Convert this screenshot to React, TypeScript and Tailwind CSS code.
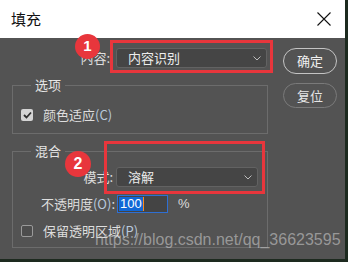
const cjk = { fontFamily: '"Noto Sans CJK SC", "Liberation Sans", sans-serif' }

function Chevron() {
  return (
    <svg width="8" height="5" viewBox="0 0 8 5" className="shrink-0">
      <path d="M0.5 0.5 L4 4 L7.5 0.5" fill="none" stroke="#bdbdbd" strokeWidth="1" />
    </svg>
  )
}

function Select({ value, width }: { value: string; width: string }) {
  return (
    <div
      className={`${width} h-[20px] flex items-center justify-between pl-[11px] pr-[5px] bg-[#454545] border border-[#626262] rounded-[3px] text-[13px] leading-[16px] text-[#ececec]`}
    >
      <span>{value}</span>
      <Chevron />
    </div>
  )
}

function Mnemonic({ k }: { k: string }) {
  return <span className="text-[#b9c9dc]">({k})</span>
}

export default function App() {
  return (
    <div className="relative w-[348px] h-[262px] overflow-hidden bg-[#1d2a1f]" style={cjk}>
      <div className="w-[345px] h-[259px] flex flex-col">
        {/* title bar */}
        <div className="h-[38px] shrink-0 bg-white flex items-center justify-between pl-[11px] pr-[14px]">
          <span className="text-[15px] leading-[18px] text-[#111]">填充</span>
          <svg width="14" height="14" viewBox="0 0 14 14">
            <path d="M0.5 0.5 L13.5 13.5 M13.5 0.5 L0.5 13.5" stroke="#111" strokeWidth="1.1" />
          </svg>
        </div>

        {/* body */}
        <div className="flex-1 bg-[#535353] flex pt-[10px] text-[#dedede]">
          <div className="ml-[12px] w-[256px] flex flex-col">
            <div className="h-[20px] flex items-center justify-end pr-[1px]">
              <span className="text-[13px] leading-[16px] mr-[6px]">内容:</span>
              <Select value="内容识别" width="w-[151px]" />
            </div>

            <fieldset className="mt-[9px] border border-[#6c6c6c]">
              <legend className="ml-[18px] px-[4px] text-[13px] leading-[16px] text-[#e6e6e6]">选项</legend>
              <div className="pt-[14px] pb-[10px] pl-[8px] flex items-center h-[40px]">
                <div className="w-[12px] h-[12px] rounded-[2px] bg-[#d4d4d4] flex items-center justify-center">
                  <svg width="9" height="8" viewBox="0 0 9 8">
                    <path d="M1 4 L3.5 6.5 L8 1.5" fill="none" stroke="#2e2e2e" strokeWidth="1.8" />
                  </svg>
                </div>
                <span className="ml-[10px] text-[13px] leading-[16px]">
                  颜色适应<Mnemonic k="C" />
                </span>
              </div>
            </fieldset>

            <fieldset className="mt-[9px] border border-[#6c6c6c]">
              <legend className="ml-[18px] px-[4px] text-[13px] leading-[16px] text-[#e6e6e6]">混合</legend>
              <div className="mt-[8px] h-[20px] flex items-center">
                <span className="w-[100px] text-right text-[13px] leading-[16px]">模式:</span>
                <div className="ml-[3px]">
                  <Select value="溶解" width="w-[142px]" />
                </div>
              </div>
              <div className="mt-[8px] h-[18px] flex items-center">
                <span className="w-[102px] text-right text-[13px] leading-[16px]">
                  不透明度<Mnemonic k="O" />:
                </span>
                <div className="ml-[2px] w-[51px] h-[18px] border border-[#2f6fd2] bg-[#444444] flex items-center pl-[1px]">
                  <span className="bg-[#1167d6] text-white text-[13px] leading-[14px] px-[1px]" style={{ fontFamily: '"Liberation Sans", sans-serif' }}>
                    100
                  </span>
                  <span className="w-[1px] h-[14px] bg-[#ff8c1a]" />
                </div>
                <span className="ml-[10px] text-[13px] leading-[16px]" style={{ fontFamily: '"Liberation Sans", sans-serif' }}>%</span>
              </div>
              <div className="mt-[10px] mb-[8px] h-[16px] pl-[8px] flex items-center">
                <div className="w-[12px] h-[12px] rounded-[2px] border border-[#9a9a9a] bg-[#4d4d4d]" />
                <span className="ml-[10px] text-[13px] leading-[16px]">
                  保留透明区域<Mnemonic k="P" />
                </span>
              </div>
            </fieldset>
          </div>

          <div className="ml-[15px] w-[54px] flex flex-col gap-[9px]">
            <div className="h-[26px] rounded-full border-[1.5px] border-[#c4c4c4] flex items-center justify-center text-[13px] leading-[16px] text-[#f0f0f0]">
              确定
            </div>
            <div className="h-[25px] rounded-full border-[1.5px] border-[#7a7a7a] flex items-center justify-center text-[13px] leading-[16px] text-[#e6e6e6]">
              复位
            </div>
          </div>
        </div>
      </div>

      {/* annotations */}
      <div className="absolute left-[110px] top-[40px] w-[163px] h-[33px] border-[3px] border-[#e8363c]" />
      <div className="absolute left-[104px] top-[141px] w-[161px] h-[53px] border-[3px] border-[#e8363c]" />
      <div
        className="absolute left-[75px] top-[34px] w-[25px] h-[25px] rounded-full bg-[#e8363c] flex items-center justify-center text-white text-[15px] font-bold"
        style={{ fontFamily: '"Liberation Sans", sans-serif' }}
      >
        1
      </div>
      <div
        className="absolute left-[65px] top-[151px] w-[26px] h-[26px] rounded-full bg-[#e8363c] flex items-center justify-center text-white text-[16px] font-bold"
        style={{ fontFamily: '"Liberation Sans", sans-serif' }}
      >
        2
      </div>
      <div
        className="absolute left-[95px] top-[231px] text-[16px] leading-[18px] text-[#c8c8c8]/60"
        style={{ fontFamily: '"Liberation Sans", sans-serif' }}
      >
        https://blog.csdn.net/qq_36623595
      </div>
    </div>
  )
}
